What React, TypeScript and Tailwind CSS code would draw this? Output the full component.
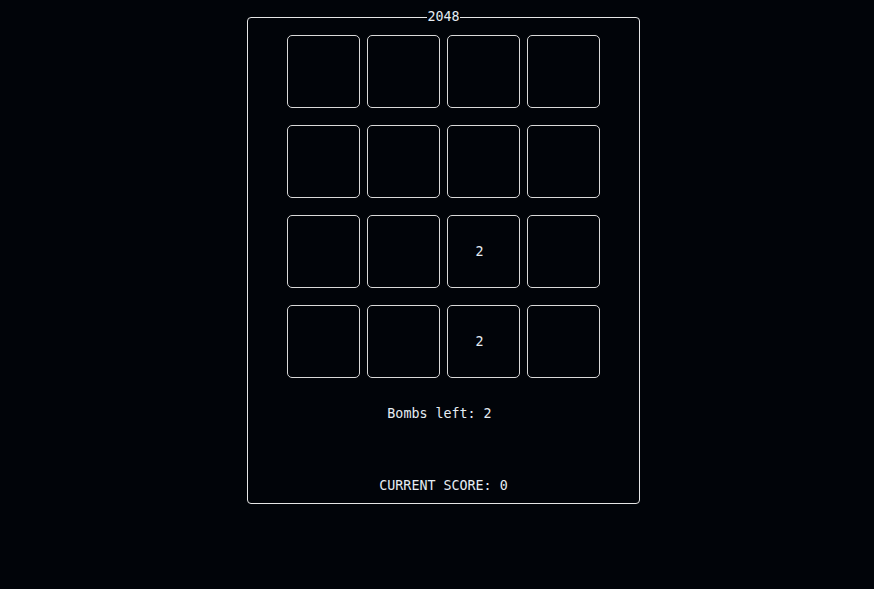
const board: (number | null)[][] = [
  [null, null, null, null],
  [null, null, null, null],
  [null, null, 2, null],
  [null, null, 2, null],
];

export default function App() {
  return (
    <div className="min-h-[589px] w-full bg-[#010409] text-[#e6edf3] font-['DejaVu_Sans_Mono',monospace] text-[13.33px] pt-[9px] pl-[247px]">
      <fieldset className="w-[393px] h-[495px] border border-[#e6e6e6] rounded-[4px] px-0 pt-[10px] pb-[9px] flex flex-col items-center">
        <legend className="mx-auto px-0 leading-[16px]">2048</legend>
        <div className="grid grid-cols-[repeat(4,73px)] auto-rows-[73px] gap-x-[7px] gap-y-[17px]">
          {board.flat().map((v, i) => (
            <div
              key={i}
              className="border border-[#d9d9d9] rounded-[5px] flex items-center justify-center pr-[8px]"
            >
              {v ?? ''}
            </div>
          ))}
        </div>
        <div className="mt-[28px] leading-[16px] pr-[8px]">Bombs left: 2</div>
        <div className="mt-auto leading-[16px]">CURRENT SCORE: 0</div>
      </fieldset>
    </div>
  );
}
